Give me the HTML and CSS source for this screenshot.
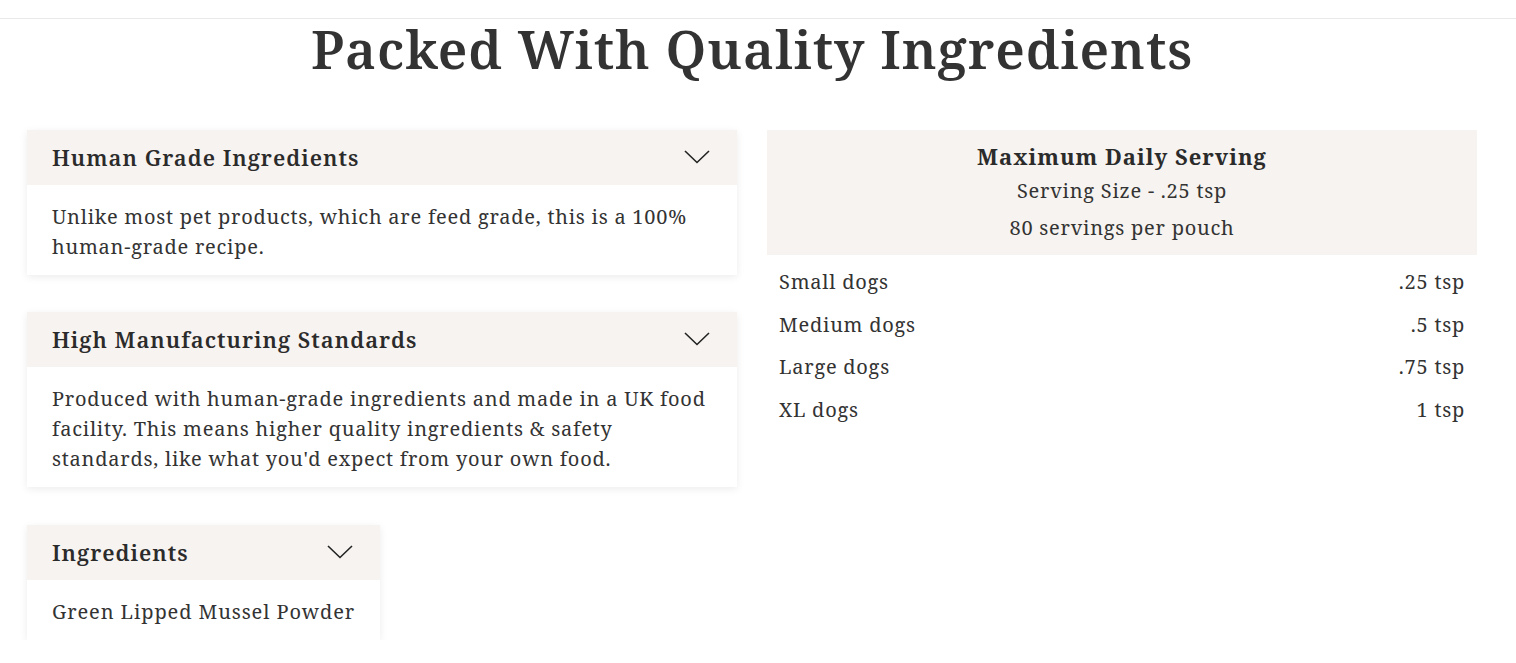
FILE: index.html
```html
<!DOCTYPE html>
<html lang="en">
<head>
<meta charset="utf-8">
<title>Packed With Quality Ingredients</title>
<link rel="stylesheet" href="styles.css">
</head>
<body>
<div class="topline"></div>
<section class="section">
  <h1 class="heading">Packed With Quality Ingredients</h1>
  <div class="columns">
    <div class="col-left">
      <div class="card">
        <div class="card-head">
          <span class="card-title">Human Grade Ingredients</span>
          <svg class="chev" width="26" height="14" viewBox="0 0 26 14"><path d="M1 1 L13 12.5 L25 1" fill="none" stroke="#222" stroke-width="1.6"/></svg>
        </div>
        <div class="card-body">Unlike most pet products, which are feed grade, this is a 100% human-grade recipe.</div>
      </div>
      <div class="card">
        <div class="card-head">
          <span class="card-title">High Manufacturing Standards</span>
          <svg class="chev" width="26" height="14" viewBox="0 0 26 14"><path d="M1 1 L13 12.5 L25 1" fill="none" stroke="#222" stroke-width="1.6"/></svg>
        </div>
        <div class="card-body">Produced with human-grade ingredients and made in a UK food facility. This means higher quality ingredients &amp; safety standards, like what you'd expect from your own food.</div>
      </div>
      <div class="card card-small">
        <div class="card-head">
          <span class="card-title">Ingredients</span>
          <svg class="chev" width="26" height="14" viewBox="0 0 26 14"><path d="M1 1 L13 12.5 L25 1" fill="none" stroke="#222" stroke-width="1.6"/></svg>
        </div>
        <div class="card-body">Green Lipped Mussel Powder</div>
      </div>
    </div>
    <div class="col-right">
      <div class="serve-head">
        <div class="serve-title">Maximum Daily Serving</div>
        <div class="serve-line">Serving Size - .25 tsp</div>
        <div class="serve-line">80 servings per pouch</div>
      </div>
      <div class="rows">
        <div class="row"><span>Small dogs</span><span>.25 tsp</span></div>
        <div class="row"><span>Medium dogs</span><span>.5 tsp</span></div>
        <div class="row"><span>Large dogs</span><span>.75 tsp</span></div>
        <div class="row"><span>XL dogs</span><span>1 tsp</span></div>
      </div>
    </div>
  </div>
</section>
</body>
</html>
```
FILE: styles.css
```css
* { box-sizing: border-box; }
body {
  margin: 0;
  background: #fff;
  color: #333;
  font-family: "Noto Serif", "DejaVu Serif", "Liberation Serif", serif;
}
.topline {
  height: 19px;
  border-bottom: 1px solid #e9e9e9;
}
.section {
  padding: 0 39px 0 27px;
}
.heading {
  margin: 0;
  text-align: center;
  font-size: 53px;
  font-weight: 600;
  line-height: 60px;
  letter-spacing: 0.95px;
  color: #333;
}
.columns {
  display: grid;
  grid-template-columns: 710px 710px;
  column-gap: 30px;
  margin-top: 51px;
}
.col-left {
  display: flex;
  flex-direction: column;
  align-items: flex-start;
  gap: 37px;
}
.card {
  width: 100%;
  box-shadow: 0 2px 8px rgba(0,0,0,0.08);
  background: #fff;
}
.card-small {
  width: auto;
  margin-top: 1px;
}
.card-head {
  background: #f7f3f0;
  height: 55px;
  padding: 0 27px 2px 25px;
  display: flex;
  align-items: center;
  justify-content: space-between;
  gap: 40px;
}
.card-title {
  font-size: 22px;
  font-weight: 600;
  color: #2b2b2b;
  letter-spacing: 1px;
}
.chev { flex: none; }
.card-body {
  padding: 17px 25px 13px;
  font-size: 20px;
  line-height: 30px;
  color: #333;
  letter-spacing: 0.75px;
}
.card-small .card-body { letter-spacing: 0.9px; }
.serve-head {
  background: #f7f3f0;
  text-align: center;
  padding: 11px 0 9px;
}
.serve-title {
  font-size: 22px;
  font-weight: 700;
  color: #2b2b2b;
  line-height: 30px;
  margin-bottom: 1px;
  letter-spacing: 1px;
}
.serve-line {
  font-size: 20px;
  line-height: 37px;
  letter-spacing: 0.75px;
}
.rows { padding: 6px 12px 0 12px; }
.row {
  display: flex;
  justify-content: space-between;
  font-size: 20px;
  line-height: 42.6px;
  letter-spacing: 0.75px;
}
```
